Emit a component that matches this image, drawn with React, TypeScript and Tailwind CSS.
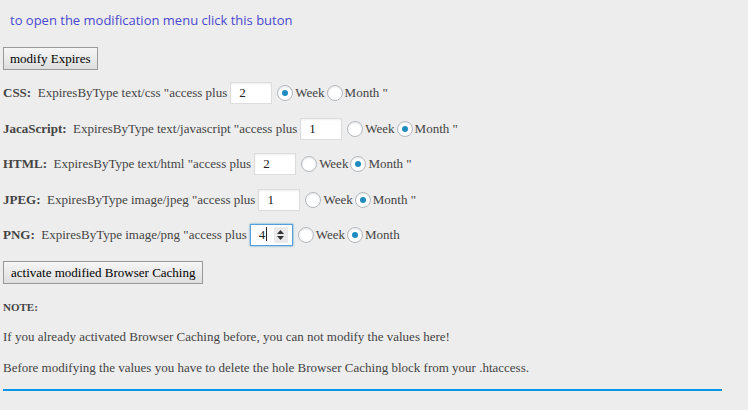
import React from "react";

const rows = [
  { label: "CSS:", type: "text/css", value: "2", unit: "week", tail: " \"" },
  { label: "JacaScript:", type: "text/javascript", value: "1", unit: "month", tail: " \"" },
  { label: "HTML:", type: "text/html", value: "2", unit: "month", tail: " \"" },
  { label: "JPEG:", type: "image/jpeg", value: "1", unit: "month", tail: " \"" },
  { label: "PNG:", type: "image/png", value: "4", unit: "month", tail: "", focused: true },
];

function Radio({ checked }: { checked: boolean }) {
  return (
    <span className="mx-[2px] flex h-4 w-4 items-center justify-center rounded-full border border-[#b4b9be] bg-white shadow-[inset_0_1px_2px_rgba(0,0,0,0.1)]">
      {checked && <span className="h-[6px] w-[6px] rounded-full bg-[#1e8cbe]" />}
    </span>
  );
}

function NumberBox({ value, focused }: { value: string; focused?: boolean }) {
  return (
    <span
      className={
        "mx-[3px] flex h-[22px] items-center bg-white pl-[8px] text-[13px] text-[#222] " +
        (focused
          ? "w-[43px] border border-[#5b9dd9] shadow-[0_0_2px_rgba(30,140,190,0.8)]"
          : "w-[42px] border border-[#ddd] shadow-[inset_0_1px_2px_rgba(0,0,0,0.07)]")
      }
    >
      <span className="flex-1">
        {value}
        {focused && <span className="ml-[1px] inline-block h-[14px] w-px translate-y-[2px] bg-[#222]" />}
      </span>
      {focused && (
        <span className="mr-[4px] flex h-[16px] w-[14px] items-center justify-center bg-[#eaeaea]">
          <svg width="9" height="12" viewBox="0 0 9 12">
            <path d="M4.5 1 L8 5 H1 Z M4.5 11 L8 7 H1 Z" fill="#333" />
          </svg>
        </span>
      )}
    </span>
  );
}

export default function App() {
  return (
    <div className="h-[410px] w-[748px] bg-[#ededed] font-['Liberation_Serif',serif] text-[13px] text-[#444]">
      <div className="w-[740px] h-full">
        <p className="pl-[10px] pt-[11px] font-['Open_Sans',sans-serif] text-[13px] leading-[19px] text-[#4a48d0]">
          to open the modification menu click this buton
        </p>
        <button className="ml-[3px] mt-[17px] h-[23px] border border-[#999] bg-gradient-to-b from-[#f6f6f6] to-[#dedede] px-[6px] text-[13px] leading-none text-black">
          modify Expires
        </button>
        <div className="mt-[12px] flex flex-col gap-[13.5px]">
          {rows.map((r) => (
            <div key={r.label} className="flex h-[22px] items-center pl-[3px]">
              <b className="font-bold">{r.label}</b>
              <span className="whitespace-pre">{`  ExpiresByType ${r.type} "access plus`}</span>
              <NumberBox value={r.value} focused={r.focused} />
              <Radio checked={r.unit === "week"} />
              <span>Week</span>
              <Radio checked={r.unit === "month"} />
              <span className="whitespace-pre">{`Month${r.tail}`}</span>
            </div>
          ))}
        </div>
        <button className="ml-[3px] mt-[15px] h-[23px] border border-[#999] bg-gradient-to-b from-[#f6f6f6] to-[#dedede] px-[7px] text-[13px] leading-none text-black">
          activate modified Browser Caching
        </button>
        <p className="mt-[15px] pl-[3px] text-[11px] leading-[16px] font-bold">NOTE:</p>
        <p className="mt-[13px] pl-[3px] text-[13px] leading-[18px]">
          If you already activated Browser Caching before, you can not modify the values here!
        </p>
        <p className="mt-[13px] pl-[3px] text-[13px] leading-[18px]">
          Before modifying the values you have to delete the hole Browser Caching block from your .htaccess.
        </p>
        <div className="ml-[3px] mt-[12px] h-[2px] w-[719px] bg-[#0a96e6]" />
      </div>
    </div>
  );
}
